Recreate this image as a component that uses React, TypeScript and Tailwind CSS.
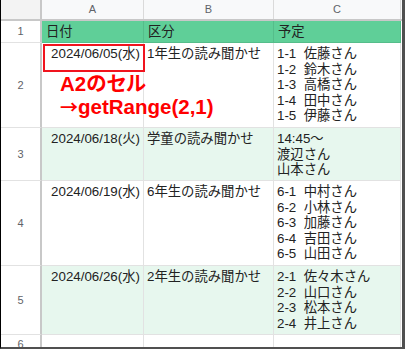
const font = "font-['Liberation_Sans','Noto_Sans_CJK_JP',sans-serif]";

type Row = {
  n: number;
  date: string;
  kind: string;
  plan: string[];
  h: string;
  band: boolean;
};

const rows: Row[] = [
  {
    n: 2,
    date: "2024/06/05(水)",
    kind: "1年生の読み聞かせ",
    plan: ["1-1  佐藤さん", "1-2  鈴木さん", "1-3  高橋さん", "1-4  田中さん", "1-5  伊藤さん"],
    h: "h-[85px]",
    band: false,
  },
  {
    n: 3,
    date: "2024/06/18(火)",
    kind: "学童の読み聞かせ",
    plan: ["14:45～", "渡辺さん", "山本さん"],
    h: "h-[53px]",
    band: true,
  },
  {
    n: 4,
    date: "2024/06/19(水)",
    kind: "6年生の読み聞かせ",
    plan: ["6-1  中村さん", "6-2  小林さん", "6-3  加藤さん", "6-4  吉田さん", "6-5  山田さん"],
    h: "h-[85px]",
    band: false,
  },
  {
    n: 5,
    date: "2024/06/26(水)",
    kind: "2年生の読み聞かせ",
    plan: ["2-1  佐々木さん", "2-2  山口さん", "2-3  松本さん", "2-4  井上さん"],
    h: "h-[69px]",
    band: true,
  },
];

function RowHeader({ n }: { n: number }) {
  return (
    <div className="w-[41px] shrink-0 flex items-center justify-center border-r-2 border-b border-r-[#c8c8c8] border-b-[#e2e2e2] bg-white text-[11px] text-[#5f6368]">
      {n}
    </div>
  );
}

export default function App() {
  return (
    <div
      className={`relative w-[405px] h-[349px] overflow-hidden bg-white border-l border-l-black border-r-[3px] border-b-2 border-r-[#505050] border-b-[#505050] ${font} text-[13.33px] text-[#222]`}
    >
      {/* column letters */}
      <div className="flex h-[21px] bg-[#f8f9fa] border-b-2 border-[#c8c8c8] text-[11px] text-[#5f6368]">
        <div className="w-[41px] shrink-0 border-r-2 border-[#c8c8c8] bg-[#f3f3f3]" />
        <div className="w-[102px] shrink-0 flex items-center justify-center border-r border-[#dadada]">A</div>
        <div className="w-[130px] shrink-0 flex items-center justify-center border-r border-[#dadada]">B</div>
        <div className="w-[127px] shrink-0 flex items-center justify-center border-r border-[#dadada]">C</div>
      </div>

      {/* table header */}
      <div className="flex h-[22px]">
        <RowHeader n={1} />
        <div className="w-[102px] shrink-0 flex items-center pl-[4px] bg-[#5fcf98] border-r border-b border-[#55bd8a]">日付</div>
        <div className="w-[130px] shrink-0 flex items-center pl-[4px] bg-[#5fcf98] border-r border-b border-[#55bd8a]">区分</div>
        <div className="w-[127px] shrink-0 flex items-center pl-[4px] bg-[#5fcf98] border-r border-b border-[#55bd8a]">予定</div>
      </div>

      {rows.map((r) => {
        const bg = r.band ? "bg-[#e7f7ee]" : "bg-white";
        return (
          <div key={r.n} className={`flex ${r.h}`}>
            <RowHeader n={r.n} />
            <div className={`w-[102px] shrink-0 pt-[3px] pr-[3px] text-right leading-[15.5px] whitespace-nowrap border-r border-b border-[#e2e2e2] ${bg}`}>
              {r.date}
            </div>
            <div className={`w-[130px] shrink-0 pt-[3px] pl-[3px] leading-[15.5px] whitespace-nowrap border-r border-b border-[#e2e2e2] ${bg}`}>
              {r.kind}
            </div>
            <div className={`w-[127px] shrink-0 pt-[3px] pl-[3px] leading-[15.5px] whitespace-pre border-r border-b border-[#e2e2e2] ${bg}`}>
              {r.plan.map((p) => (
                <div key={p}>{p}</div>
              ))}
            </div>
          </div>
        );
      })}

      <div className="flex h-[14px]">
        <div className="w-[41px] shrink-0 flex items-start justify-center pt-px border-r-2 border-[#c8c8c8] text-[11px] text-[#5f6368]">6</div>
        <div className="w-[102px] shrink-0 border-r border-[#e2e2e2]" />
        <div className="w-[130px] shrink-0 border-r border-[#e2e2e2]" />
        <div className="w-[127px] shrink-0 border-r border-[#e2e2e2]" />
      </div>

      {/* annotation over cell A2 */}
      <div className="absolute left-[42px] top-[44px] w-[102px] h-[28px] border-2 border-[#f0141e]" />
      <div className="absolute left-[59px] top-[72px] text-[20.5px] leading-[23px] font-bold text-[#ff0000] whitespace-nowrap [font-feature-settings:'palt']">
        <div>A2のセル</div>
        <div>
          <span className="font-['Noto_Sans_CJK_JP',sans-serif] text-[18px]">→</span>getRange(2,1)
        </div>
      </div>
    </div>
  );
}
